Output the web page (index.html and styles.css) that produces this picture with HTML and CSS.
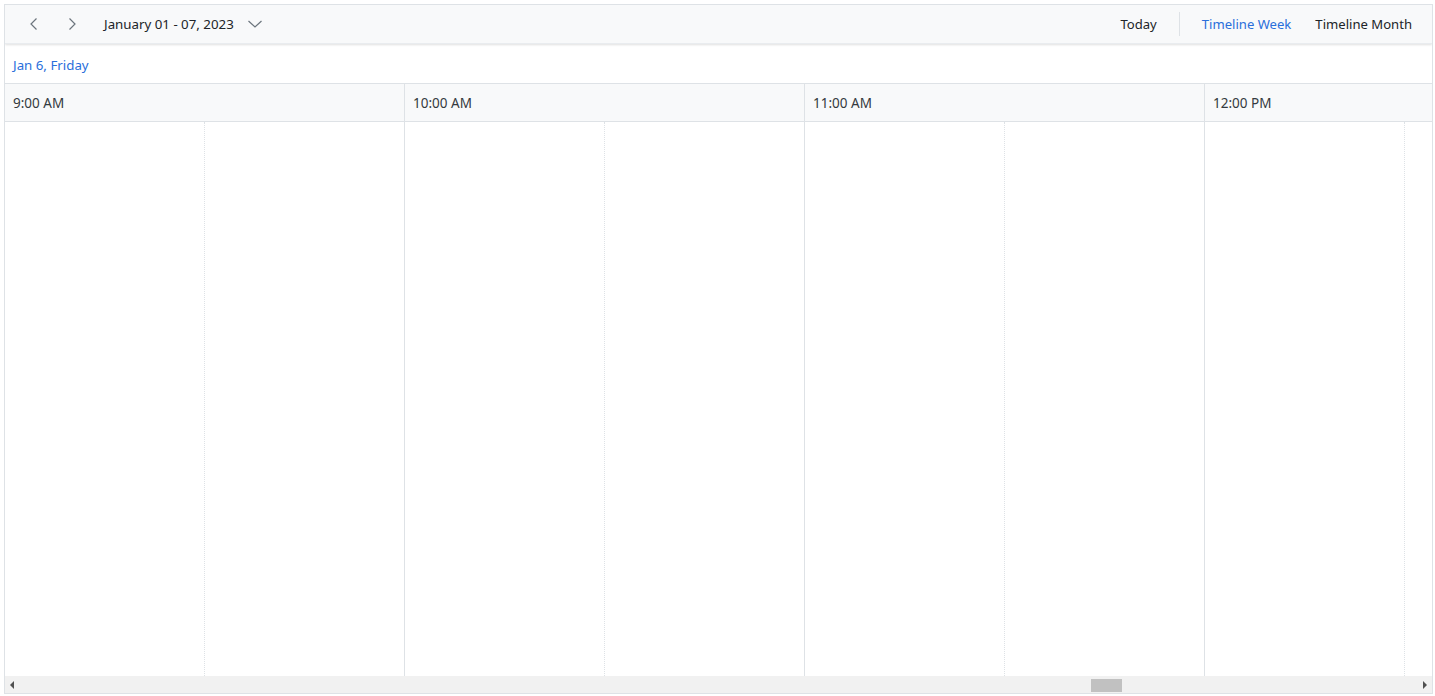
FILE: index.html
```html
<!DOCTYPE html>
<html>
<head>
<meta charset="utf-8">
<link rel="stylesheet" href="styles.css">
</head>
<body>
<div class="scheduler">
  <div class="toolbar">
    <div class="tb-left">
      <button class="icon-btn" aria-label="Previous">
        <svg width="16" height="16" viewBox="0 0 16 16"><path d="M10.5 2.5 L5 8 L10.5 13.5" fill="none" stroke="#6c757d" stroke-width="1.2"/></svg>
      </button>
      <button class="icon-btn" aria-label="Next">
        <svg width="16" height="16" viewBox="0 0 16 16"><path d="M5.5 2.5 L11 8 L5.5 13.5" fill="none" stroke="#6c757d" stroke-width="1.2"/></svg>
      </button>
      <div class="date-range">
        <span>January 01 - 07, 2023</span>
        <svg width="16" height="16" viewBox="0 0 16 16"><path d="M1.5 5 L8 11 L14.5 5" fill="none" stroke="#6c757d" stroke-width="1.2"/></svg>
      </div>
    </div>
    <div class="tb-right">
      <span class="tb-item">Today</span>
      <span class="tb-sep"></span>
      <span class="tb-item active">Timeline Week</span>
      <span class="tb-item">Timeline Month</span>
    </div>
  </div>
  <div class="date-row"><span>Jan 6, Friday</span></div>
  <div class="time-row">
    <div class="time-cell">9:00 AM</div>
    <div class="time-cell">10:00 AM</div>
    <div class="time-cell">11:00 AM</div>
    <div class="time-cell">12:00 PM</div>
  </div>
  <div class="grid">
    <div class="slot"></div><div class="slot half"></div>
    <div class="slot"></div><div class="slot half"></div>
    <div class="slot"></div><div class="slot half"></div>
    <div class="slot"></div><div class="slot half"></div>
  </div>
  <div class="hscroll">
    <span class="arrow left"></span>
    <div class="track"><div class="thumb"></div></div>
    <span class="arrow right"></span>
  </div>
</div>
</body>
</html>
```
FILE: styles.css
```css
* { box-sizing: border-box; }
html, body { margin: 0; padding: 0; background: #fff; }
body { padding: 4px 2px 2px 4px; font-family: "Noto Sans", "Open Sans", sans-serif; color: #212529; }
.scheduler {
  width: 1429px;
  height: 690px;
  border: 1px solid #dee2e6;
  display: flex;
  flex-direction: column;
  overflow: hidden;
}
.toolbar {
  height: 39px;
  flex: none;
  background: #f8f9fa;
  display: flex;
  align-items: center;
  justify-content: space-between;
  box-shadow: 0 1px 2px rgba(0,0,0,0.12);
  border-bottom: 1px solid #e9ecef;
  position: relative;
  z-index: 1;
}
.tb-left { display: flex; align-items: center; padding-left: 10px; }
.icon-btn {
  border: 0; background: none; padding: 0; width: 38px; height: 30px;
  display: flex; align-items: center; justify-content: center;
}
.date-range { display: flex; align-items: center; gap: 13px; margin-left: 13px; font-size: 13.3px; color: #212529; }
.tb-right { display: flex; align-items: center; padding-right: 20px; font-size: 13.1px; }
.tb-item { color: #212529; }
.tb-item:first-child { margin-right: 22px; }
.tb-item.active { color: #2a6fdb; margin-left: 22px; margin-right: 24px; }
.tb-sep { width: 1px; height: 24px; background: #dee2e6; }
.date-row {
  height: 40px; flex: none;
  border-bottom: 1px solid #dee2e6;
  display: flex; align-items: center; padding-left: 8px; padding-top: 3px;
  font-size: 13.3px; color: #2a6fdb;
}
.time-row {
  height: 38px; flex: none;
  display: flex; background: #f8f9fa;
  border-bottom: 1px solid #dee2e6;
}
.time-cell {
  width: 400px; flex: none;
  border-right: 1px solid #dee2e6;
  display: flex; align-items: center; padding-left: 8px;
  font-size: 13.5px; color: #343a40;
}
.grid { flex: 1; display: flex; }
.slot { width: 200px; flex: none; border-right: 1px dotted #dee2e6; }
.slot.half { border-right: 1px solid #dee2e6; }
.hscroll {
  height: 17px; flex: none; display: flex; align-items: center;
  background: #f1f1f1; border-top: 1px solid #f1f1f1;
}
.arrow { width: 16px; height: 16px; flex: none; position: relative; }
.arrow.left::after, .arrow.right::after {
  content: ""; position: absolute; top: 4px;
  border-top: 4px solid transparent; border-bottom: 4px solid transparent;
}
.arrow.left::after { left: 5px; border-right: 4px solid #505050; }
.arrow.right::after { left: 7px; border-left: 4px solid #505050; }
.track { flex: 1; height: 100%; display: flex; align-items: center; padding-left: 1070px; }
.thumb { width: 31px; height: 13px; background: #c1c1c1; }
```
